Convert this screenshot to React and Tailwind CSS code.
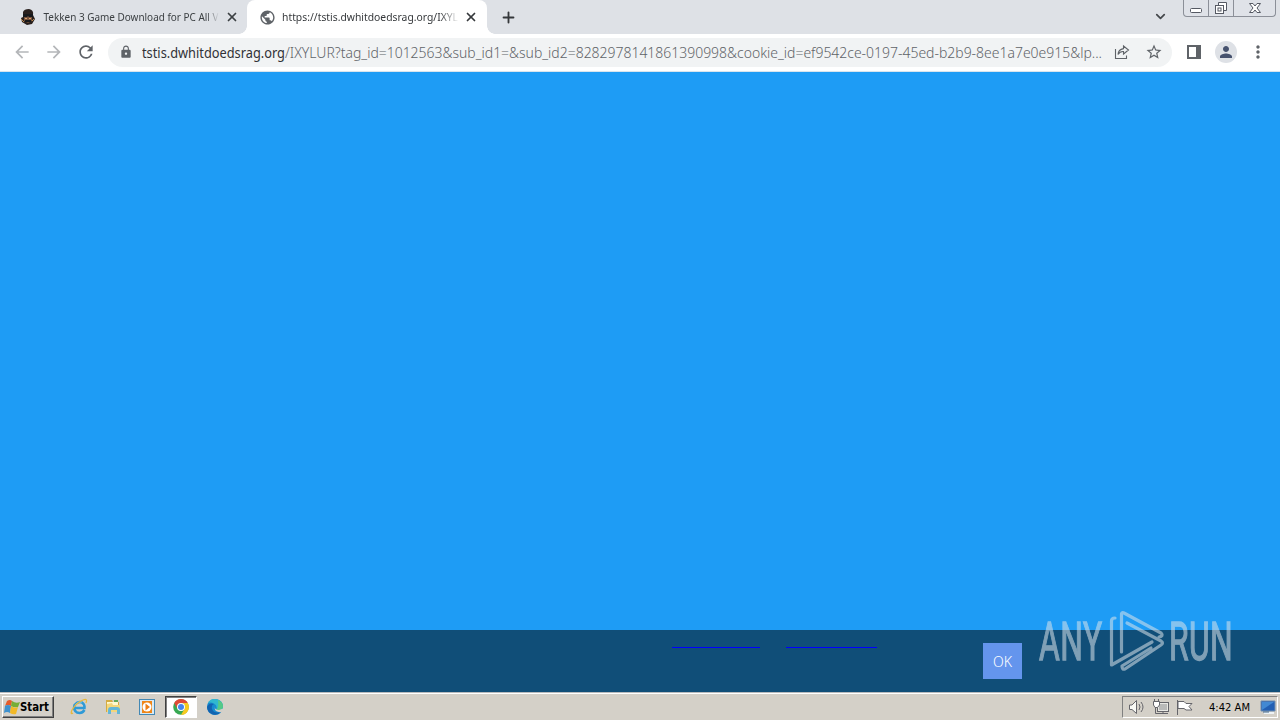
import { ChevronDown, Plus, X } from "lucide-react";
import { MdArrowBack, MdArrowForward, MdLock, MdMoreVert, MdPerson, MdPublic, MdRefresh, MdStarBorder } from "react-icons/md";

function TekkenIcon() {
  return (
    <svg width="16" height="16" viewBox="0 0 16 16" className="shrink-0">
      <path d="M3 3Q4 0 9 0Q14 1 13 6L15 10L12 15L7 16L2 13L1 9L3 8Z" fill="#29201d" />
      <path d="M4 6L12 6L12 12L8 14L4 12Z" fill="#76513a" />
      <path d="M3 5H13V8H9L8 7L7 8H3ZM5 11H11V13H5Z" fill="#17191c" />
      <path d="M1 10L4 13M12 12L14 10" stroke="#bd8a4e" />
      <path d="M5 9.5H7M9 9.5H11" stroke="#d6a06f" />
    </svg>
  );
}

function WindowControls() {
  return (
    <div className="mr-[4px] flex h-[17px] w-[93px] shrink-0 rounded-b-[4px] border border-t-0 border-[#8b8f98] bg-[#dfe2e8]">
      <svg width="91" height="16" viewBox="0 0 91 16" fill="none" stroke="#555963">
        <path d="M24.5 0V16M49.5 0V16" stroke="#8b8f98" />
        <rect x="6.5" y="8.5" width="11" height="4" rx="1" fill="white" />
        <path d="M34.5 5V2.5H42.5V10.5H40" fill="white" />
        <rect x="31.5" y="5.5" width="8" height="8" fill="white" />
        <rect x="34" y="8" width="3" height="3" />
        <path d="M65.5 3.5H69L71 6L73 3.5H76.5L73 8L76.5 12.5H73L71 10L69 12.5H65.5L69 8Z" fill="white" />
      </svg>
    </div>
  );
}

function TabStrip() {
  return (
    <div className="flex h-[34px] bg-[#dee1e6]">
      <div className="flex w-[247px] items-center rounded-br-lg pl-5 text-[#3c4043]">
        <TekkenIcon />
        <div className="ml-[7px] w-[177px] [mask-image:linear-gradient(to_right,black_164px,transparent_176px)]">
          <svg width="177" height="18" className="block font-['Noto_Sans',sans-serif] text-[11.5px]">
            <text x="0.5" y="13" textLength="175" lengthAdjust="spacingAndGlyphs" fill="currentColor">Tekken 3 Game Download for PC All V</text>
          </svg>
        </div>
        <X size={14} strokeWidth={3} className="ml-[5px]" />
      </div>
      <div className="relative flex w-[240px] items-center rounded-t-[8px] bg-white pl-[12px] text-[#35383b]">
        <div className="absolute bottom-0 -left-2 size-2 bg-[radial-gradient(circle_at_0_0,#dee1e6_7.5px,white_8px)]" />
        <div className="absolute -right-2 bottom-0 size-2 bg-[radial-gradient(circle_at_100%_0,#dee1e6_7.5px,white_8px)]" />
        <MdPublic size={17} className="shrink-0 text-[#5f6368]" />
        <div className="ml-[6px] w-[177px] [mask-image:linear-gradient(to_right,black_158px,transparent_177px)]">
          <svg width="177" height="18" className="block font-['Noto_Sans',sans-serif] text-[11.5px]">
            <text x="0" y="13" textLength="176" lengthAdjust="spacingAndGlyphs" fill="currentColor">https://tstis.dwhitdoedsrag.org/IXYL</text>
          </svg>
        </div>
        <X size={14} strokeWidth={3} className="ml-[5px]" />
      </div>
      <div className="flex w-[43px] items-center justify-center text-[#35383b]">
        <Plus size={17} strokeWidth={2.6} />
      </div>
      <div className="flex-1" />
      <ChevronDown size={15} strokeWidth={2.8} className="mt-[9px] mr-[15px] text-[#45484c]" />
      <WindowControls />
    </div>
  );
}

function Toolbar() {
  return (
    <div className="flex h-[38px] items-center border-b border-[#d9e4ed] bg-white pb-px pl-[12px] text-[#5f6368]">
      <MdArrowBack size={20} className="text-[#b4b6b9]" />
      <MdArrowForward size={20} className="ml-[12px] text-[#b4b6b9]" />
      <MdRefresh size={20} className="ml-[12px]" />
      <div className="ml-[12px] flex h-[29px] w-[1064px] items-center rounded-full bg-[#f1f3f4] pl-[11px]">
        <MdLock size={14} className="shrink-0" />
        <svg width="964" height="24" className="ml-[9px] shrink-0 font-['Noto_Sans',sans-serif] text-[14px]">
          <text x="0" y="18" textLength="143" lengthAdjust="spacingAndGlyphs" fill="#303136">tstis.dwhitdoedsrag.org</text>
          <text x="143" y="18" textLength="817" lengthAdjust="spacingAndGlyphs" fill="#5f6368" className="font-light">/IXYLUR?tag_id=1012563&amp;sub_id1=&amp;sub_id2=8282978141861390998&amp;cookie_id=ef9542ce-0197-45ed-b2b9-8ee1a7e0e915&amp;lp...</text>
        </svg>
        <svg width="16" height="16" viewBox="0 0 16 16" fill="none" stroke="currentColor" strokeWidth="1.1" className="ml-[8px] shrink-0">
          <path d="M1.5 5V14.5H12.5V11.5M9.5 2L14.5 6L9.5 10V7.5Q6 7.2 4 10.5Q4.3 5.5 9.5 4.6Z" />
        </svg>
        <MdStarBorder size={18} className="ml-[15px] shrink-0" />
      </div>
      <svg width="14" height="14" viewBox="0 0 14 14" className="ml-[15px] shrink-0">
        <path d="M1 1H13V13H1Z" fill="none" stroke="#5f6368" strokeWidth="2" />
        <path d="M9 1H13V13H9Z" fill="#5f6368" />
      </svg>
      <div className="ml-[14px] flex size-[22px] items-center justify-center rounded-full bg-[#dee1e6]">
        <MdPerson size={18} className="text-[#46526e]" />
      </div>
      <MdMoreVert size={20} className="ml-[11px]" />
    </div>
  );
}

function Watermark() {
  return (
    <svg width="196" height="66" viewBox="1037 608 196 66" className="absolute top-[-22px] left-[1037px] opacity-55" fill="none" stroke="#dce4ea">
      <g fill="#dce4ea" strokeWidth="1.3" className="font-['Roboto',sans-serif] text-[53px]">
        <text transform="translate(1039 660) scale(.6 1)" textLength="105">ANY</text>
        <text transform="translate(1169 660) scale(.6 1)" textLength="106">RUN</text>
      </g>
      <g strokeWidth="3.2" strokeLinejoin="round" strokeLinecap="round">
        <path d="M1121.5 652V614Q1122 612 1124 613L1161 633Q1164 636 1159 637" />
        <path d="M1115 618Q1111.5 618 1111.5 621V665L1152 642" />
        <path d="M1127 623L1161 641Q1164 643 1161 645L1125 669Q1122 670 1122 666L1151 648" />
      </g>
    </svg>
  );
}

function StartFlag() {
  return (
    <svg width="16" height="16" viewBox="0 0 16 16">
      <path d="M3 2Q6 0 8 2L7 7Q4 5 1 7Z" fill="#e45b2b" />
      <path d="M8 2Q12 5 16 3L14 8Q10 9 7 7Z" fill="#76ae36" />
      <path d="M1 7Q4 5 7 7L6 14Q3 12 0 14Z" fill="#3e91ce" />
      <path d="M7 7Q11 10 14 8L12 15Q9 16 6 14Z" fill="#f2b927" />
    </svg>
  );
}

function InternetExplorerIcon() {
  return (
    <svg width="18" height="18" viewBox="0 0 18 18" fill="none">
      <path d="M14.5 12Q12 16 7 14.5Q3 12 4.5 7Q8 3 12 4.5Q15 6.5 14.5 10H5" stroke="#2e9ad7" strokeWidth="2.5" />
      <path d="M12 4Q8 3 5 7" stroke="#79cff3" />
      <path d="M3 15Q0 17 2 12Q6 5 13 2Q18 0 16 5" stroke="#e8b83b" strokeWidth="1.3" />
    </svg>
  );
}

function ExplorerIcon() {
  return (
    <svg width="18" height="18" viewBox="0 0 18 18">
      <path d="M2 2H8L9 4H15V14H2Z" fill="#d4ab43" />
      <path d="M3 4H14V8H3Z" fill="#fff9cf" />
      <path d="M3 6L8 5L9 7H16V14H3Z" fill="#f4d67a" />
      <path d="M4 16V12Q4 9 7 9H13Q16 9 16 12V16H13V12H7V16Z" fill="#64b6d7" />
      <path d="M10 2H14V4H10Z" fill="#65a95a" />
    </svg>
  );
}

function MediaPlayerIcon() {
  return (
    <svg width="18" height="18" viewBox="0 0 18 18">
      <rect x="1.5" y="1.5" width="15" height="15" fill="#d8eaf5" stroke="#4388b4" />
      <path d="M4 3H14V15H4Z" fill="#ef8617" />
      <circle cx="9" cy="9" r="4.5" fill="white" />
      <path d="M7.5 5.5L12 9L7.5 12.5Z" fill="#ed7e14" />
    </svg>
  );
}

function ChromeIcon() {
  return (
    <svg width="16" height="16" viewBox="0 0 16 16">
      <circle cx="8" cy="8" r="7.8" fill="#37a852" />
      <path d="M1.2 4A7.8 7.8 0 0 1 14.8 4H8A4 4 0 0 0 4.5 10Z" fill="#df4936" />
      <path d="M14.8 4A7.8 7.8 0 0 1 8 15.8L11.5 10A4 4 0 0 0 8 4Z" fill="#f8c91e" />
      <circle cx="8" cy="8" r="4" fill="white" />
      <circle cx="8" cy="8" r="3" fill="#4584ed" />
    </svg>
  );
}

function EdgeIcon() {
  return (
    <svg width="18" height="18" viewBox="0 0 18 18">
      <circle cx="9" cy="9" r="8" fill="#168bd0" />
      <path d="M8 1A8 8 0 0 1 17 8Q17 12 13 12H10Q12 8 8 5.5Q5 4 2 5Q4 1 8 1Z" fill="#30b8cf" />
      <path d="M12 2Q17 4 17 8Q17 12 13 12H10Q13 10 12 2Z" fill="#55c987" />
      <path d="M1 9Q3 4 8 6Q5 7 6 11Q8 16 15 14A8 8 0 0 1 1 9Z" fill="#1263b0" />
      <path d="M9 8Q8 12 13 12L17 10.5V13L15.5 14Q14 14.5 11 13.6Q8 12.5 9 8Z" fill="#d4d0c8" />
    </svg>
  );
}

function SystemTray() {
  return (
    <div className="mr-[2px] flex h-[22px] w-[156px] items-center border border-t-[#808080] border-r-white border-b-white border-l-[#808080] pl-[5px]">
      <svg width="68" height="18" viewBox="0 0 68 18" fill="none" stroke="#65656a" className="shrink-0">
        <path d="M1.5 7H4L8.5 2.5V15.5L4 11.5H1.5Z" fill="#f8f8f4" />
        <path d="M11 6Q13 9 11 12M13 4Q17 9 13 14" />
        <rect x="29.5" y="4.5" width="11" height="9" fill="#e8e8e4" />
        <path d="M31 6H39V12H31Z" fill="#b9bab9" stroke="none" />
        <path d="M30 15.5H40M35 14V16M27.5 10V15.5H30" />
        <path d="M25.5 3.5H31.5V7L29.5 9.5H27L25.5 7Z" fill="white" />
        <path d="M26.5 1V4M30.5 1V4" />
        <path d="M49.5 2V17M50 3.5H56L58 5.5H64L61 8.5L64 12H58L56 10.5H50Z" fill="white" />
      </svg>
      <svg width="42" height="18" className="ml-[13px] shrink-0 font-['DejaVu_Sans_Condensed','DejaVu_Sans',sans-serif] text-[11px]">
        <text x="0" y="13" textLength="41" lengthAdjust="spacingAndGlyphs">4:42 AM</text>
      </svg>
      <svg width="18" height="18" viewBox="0 0 18 18" className="ml-[8px] shrink-0">
        <path d="M2 3H16V13H2Z" fill="#225fb3" stroke="#708eaf" />
        <path d="M3 4H15L9 8L3 12Z" fill="#4289d3" />
        <path d="M5 15H15" stroke="#edf2f5" strokeWidth="2" />
        <path d="M4 14H10" stroke="#43698e" />
      </svg>
    </div>
  );
}

function Taskbar() {
  return (
    <div className="flex h-[28px] items-center border-t border-[#b8bbbd] bg-[#d4d0c8] pt-px shadow-[inset_0_1px_0_white]">
      <div className="ml-[2px] flex h-[22px] w-[52px] items-center border border-t-white border-r-[#404040] border-b-[#404040] border-l-white pl-px shadow-[inset_-1px_-1px_0_#808080]">
        <StartFlag />
        <svg width="30" height="16" className="shrink-0 font-['DejaVu_Sans_Condensed','DejaVu_Sans',sans-serif] text-[11.5px] font-bold">
          <text x="0" y="12" textLength="29" lengthAdjust="spacingAndGlyphs">Start</text>
        </svg>
      </div>
      <div className="ml-[16px] flex items-center">
        <InternetExplorerIcon />
        <div className="ml-[16px]"><ExplorerIcon /></div>
        <div className="ml-[16px]"><MediaPlayerIcon /></div>
      </div>
      <div className="ml-[9px] flex h-[22px] w-[32px] items-center justify-center border border-t-[#404040] border-r-white border-b-white border-l-[#404040] bg-white shadow-[inset_1px_1px_0_#808080]">
        <ChromeIcon />
      </div>
      <div className="ml-[9px]"><EdgeIcon /></div>
      <div className="flex-1" />
      <SystemTray />
    </div>
  );
}

function App() {
  return (
    <div className="flex h-[720px] w-[1280px] flex-col overflow-hidden bg-white">
      <TabStrip />
      <Toolbar />
      <main className="flex-1 bg-[#1e9cf5]" />
      <div className="relative flex h-[62px] bg-[#104e78]">
        <div className="mt-[17px] ml-[672px] h-px w-[88px] bg-[#0000ff]" />
        <div className="mt-[17px] ml-[26px] h-px w-[91px] bg-[#0000ff]" />
        <button className="mt-[13px] ml-[106px] h-[36px] w-[39px] bg-[#6495ed] pt-px font-['Noto_Sans',sans-serif] text-[14px] font-light text-white">OK</button>
        <Watermark />
      </div>
      <Taskbar />
    </div>
  );
}

export default App;
